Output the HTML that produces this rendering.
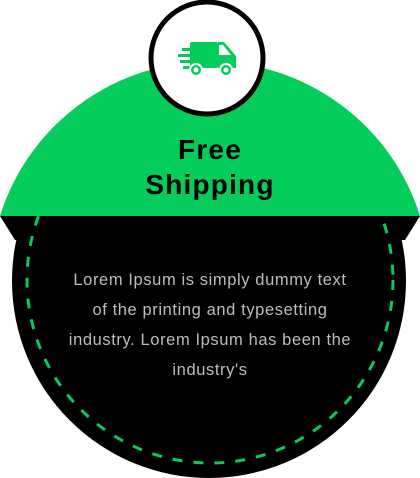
<!DOCTYPE html>
<html><head><style>
html,body{margin:0;padding:0;background:#fff;width:420px;height:478px;overflow:hidden}
.t{position:absolute;left:0;width:420px;text-align:center;font-family:"Liberation Sans",sans-serif}
</style></head><body>
<svg width="420" height="478" style="position:absolute;left:0;top:0">
<path d="M0,216 A220,220 0 0 1 420,216 Z" fill="#05cd5b"/>
<polygon points="0,216 420,216 405,240 15,240" fill="#000"/>
<clipPath id="c"><rect x="0" y="216" width="420" height="262"/></clipPath>
<circle cx="209" cy="281" r="197" fill="#000" clip-path="url(#c)"/>
<circle cx="210" cy="280" r="183" fill="none" stroke="#05cd5b" stroke-width="3" stroke-dasharray="10 11" clip-path="url(#c)"/>
<circle cx="207" cy="58" r="56" fill="#fff" stroke="#000" stroke-width="5"/>
<g fill="#05cd5b">
<rect x="190" y="42" width="28" height="26" rx="2"/>
<path d="M218,42 h6 l12,14 v12 h-18 z"/>
<path d="M219,45 h4 l8,10 h-12 z" fill="#fff"/>
<rect x="182" y="48" width="12" height="3"/>
<rect x="178" y="54" width="14" height="3"/>
<rect x="180" y="60" width="12" height="3"/>
<rect x="183" y="66" width="10" height="3"/>
<circle cx="196" cy="70" r="6" stroke="#fff" stroke-width="2"/>
<circle cx="226" cy="70" r="6" stroke="#fff" stroke-width="2"/>
</g>
<circle cx="196" cy="70" r="2.5" fill="#fff"/>
<circle cx="226" cy="70" r="2.5" fill="#fff"/>
</svg>
<div class="t" style="top:132px;font-size:28px;font-weight:bold;line-height:35px;color:#000;letter-spacing:1.2px">Free<br>Shipping</div>
<div class="t" style="top:265px;font-size:16.5px;line-height:30px;color:#bdbdbd;letter-spacing:0.6px">Lorem Ipsum is simply dummy text<br>of the printing and typesetting<br>industry. Lorem Ipsum has been the<br>industry's</div>
</body></html>
